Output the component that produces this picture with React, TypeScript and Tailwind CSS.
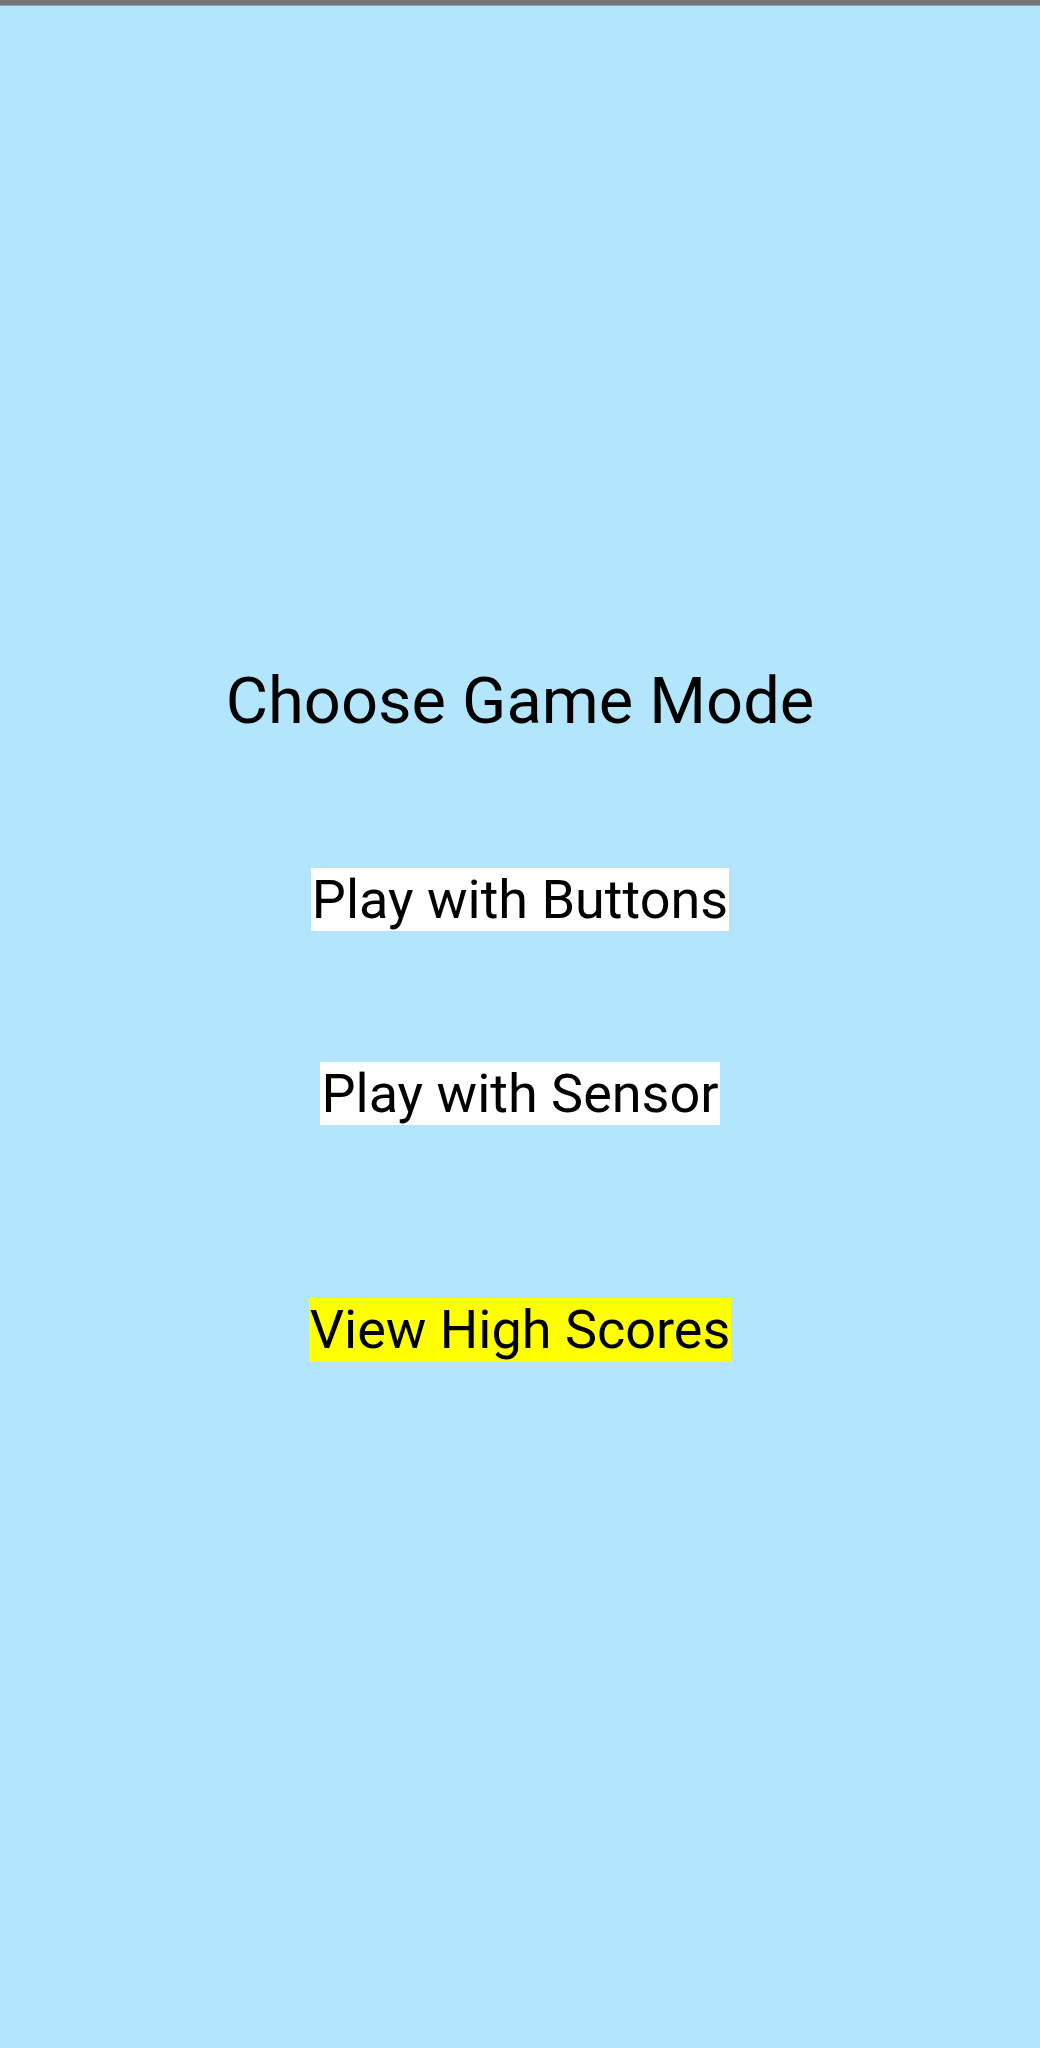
import React from "react";

export default function App() {
  return (
    <div className="w-[1040px] h-[2048px] bg-[#b3e5fc] flex flex-col" style={{ fontFamily: "Roboto, 'Liberation Sans', sans-serif" }}>
      <div className="h-[5px] bg-[#767676] shrink-0" />
      <div className="h-px bg-[#8fa9b4] shrink-0" />
      <div className="flex flex-col items-center pt-[658px]">
        <h1 className="text-[65px] leading-[75px] text-black font-normal">Choose Game Mode</h1>
        <button className="mt-[129px] bg-white px-[1px] text-[54px] leading-[63px] text-black">Play with Buttons</button>
        <button className="mt-[131px] bg-white px-[1px] text-[54px] leading-[63px] text-black">Play with Sensor</button>
        <button className="mt-[173px] bg-[#ffff00] px-[1px] text-[54px] leading-[64px] text-black">View High Scores</button>
      </div>
    </div>
  );
}
